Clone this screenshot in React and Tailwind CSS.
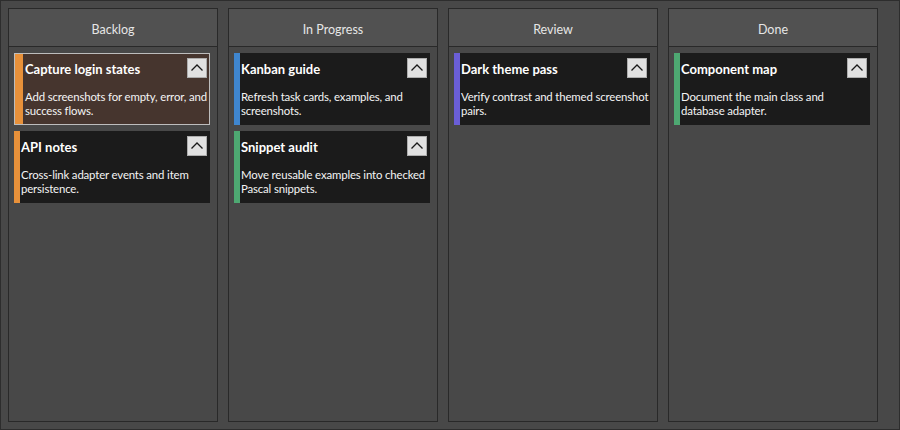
import React from "react";

const columns = [
  {
    name: "Backlog",
    cards: [
      { title: "Capture login states", desc: ["Add screenshots for empty, error, and", "success flows."], color: "bg-[#e8913a]", selected: true },
      { title: "API notes", desc: ["Cross-link adapter events and item", "persistence."], color: "bg-[#e8913a]" },
    ],
  },
  {
    name: "In Progress",
    cards: [
      { title: "Kanban guide", desc: ["Refresh task cards, examples, and", "screenshots."], color: "bg-[#3f86cf]" },
      { title: "Snippet audit", desc: ["Move reusable examples into checked", "Pascal snippets."], color: "bg-[#4ea872]" },
    ],
  },
  {
    name: "Review",
    cards: [
      { title: "Dark theme pass", desc: ["Verify contrast and themed screenshot", "pairs."], color: "bg-[#6a5ed6]" },
    ],
  },
  {
    name: "Done",
    cards: [
      { title: "Component map", desc: ["Document the main class and", "database adapter."], color: "bg-[#4ea872]" },
    ],
  },
];

function Chevron() {
  return (
    <button className="w-[20px] h-[20px] shrink-0 bg-[#e1e1e1] border border-[#adadad] flex items-center justify-center">
      <svg width="18" height="18" viewBox="0 0 18 18">
        <polyline points="3.5,11.5 9,6 14.5,11.5" fill="none" stroke="#1a1a1a" strokeWidth="1.3" />
      </svg>
    </button>
  );
}

function Card({ card }) {
  return (
    <div
      className={
        "flex w-[196px] h-[72px] " +
        (card.selected ? "bg-[#46352e] border border-[#bdbdbd]" : "bg-[#1b1b1b]")
      }
    >
      <div className={"shrink-0 " + card.color + (card.selected ? " w-[8px]" : " w-[6px]")} />
      <div className={"flex-1 min-w-0 flex flex-col " + (card.selected ? "pl-[2px] pr-[2px] pt-[4px]" : "pl-[1px] pr-[3px] pt-[5px]")}>
        <div className="flex items-center justify-between">
          <span className="text-[13px] font-bold text-white leading-[16px] pt-[2px]">{card.title}</span>
          <Chevron />
        </div>
        <p className="mt-[12px] text-[11.4px] tracking-[-0.15px] leading-[14px] text-[#f4f4f4] whitespace-nowrap">
          {card.desc[0]}
          <br />
          {card.desc[1]}
        </p>
      </div>
    </div>
  );
}

export default function App() {
  return (
    <div
      className="w-[900px] h-[430px] bg-[#484848] border border-[#2d2d2d] flex gap-[10px] pl-[7px] pt-[7px] pb-[7px] pr-[21px]"
      style={{ fontFamily: 'Lato, "Noto Sans", sans-serif' }}
    >
      {columns.map((col) => (
        <div key={col.name} className="w-[210px] shrink-0 border border-[#292929] flex flex-col">
          <div className="h-[38px] shrink-0 bg-[#515151] border-b border-[#292929] flex items-center justify-center pt-[5px] text-[12.5px] text-[#e6e6e6]">
            {col.name}
          </div>
          <div className="flex-1 bg-[#484848] px-[5px] pt-[6px] flex flex-col gap-[6px]">
            {col.cards.map((c) => (
              <Card key={c.title} card={c} />
            ))}
          </div>
        </div>
      ))}
    </div>
  );
}
